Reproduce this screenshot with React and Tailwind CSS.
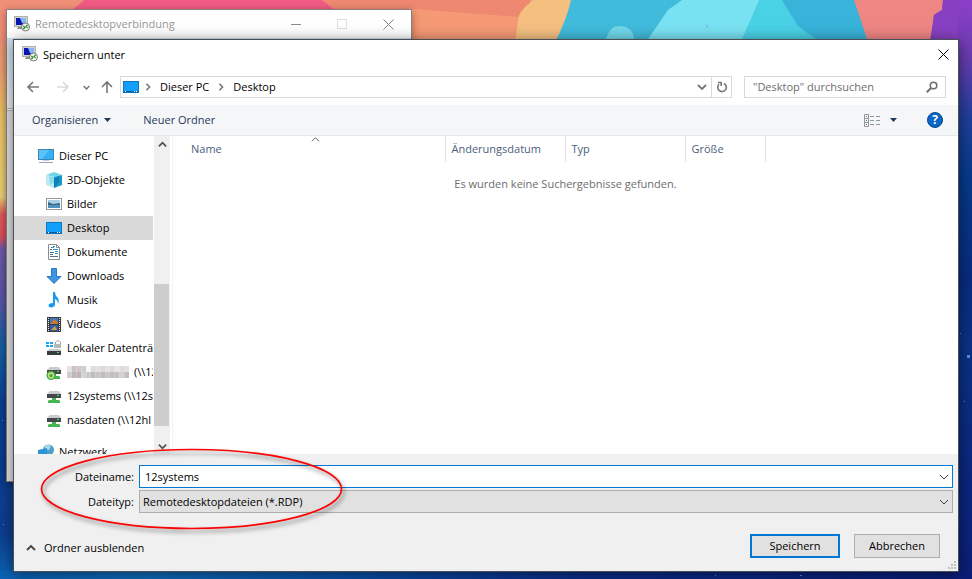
import React from "react";

const Wallpaper = () => (
  <svg
    className="absolute inset-0 w-full h-full"
    viewBox="0 0 972 579"
    preserveAspectRatio="none"
    aria-hidden="true"
  >
    <defs>
      <linearGradient id="leftSky" x1="0" y1="0" x2="0" y2="1">
        <stop offset="0" stopColor="#f08f76" />
        <stop offset="0.12" stopColor="#ef9f70" />
        <stop offset="0.2" stopColor="#ebc568" />
        <stop offset="0.34" stopColor="#ecd078" />
        <stop offset="0.37" stopColor="#e25a5a" />
        <stop offset="0.41" stopColor="#d9505c" />
        <stop offset="0.43" stopColor="#6f5bab" />
        <stop offset="0.52" stopColor="#5a55a6" />
        <stop offset="0.6" stopColor="#1460a4" />
        <stop offset="0.7" stopColor="#0d3f90" />
        <stop offset="0.92" stopColor="#0c3d8e" />
        <stop offset="1" stopColor="#0b63b4" />
      </linearGradient>
      <linearGradient id="rightSky" x1="0" y1="0" x2="0" y2="1">
        <stop offset="0" stopColor="#8c3fc8" />
        <stop offset="0.1" stopColor="#6a3cb2" />
        <stop offset="0.2" stopColor="#1f3f9c" />
        <stop offset="0.3" stopColor="#063a8c" />
        <stop offset="0.48" stopColor="#082c80" />
        <stop offset="0.6" stopColor="#0a3286" />
        <stop offset="1" stopColor="#0a1f78" />
      </linearGradient>
      <linearGradient id="ground" x1="0" y1="0" x2="1" y2="0">
        <stop offset="0" stopColor="#0a62b4" />
        <stop offset="0.15" stopColor="#0f6bb8" />
        <stop offset="0.35" stopColor="#0a52a8" />
        <stop offset="0.6" stopColor="#0a2c88" />
        <stop offset="1" stopColor="#0a1c78" />
      </linearGradient>
    </defs>
    <rect width="500" height="579" fill="url(#leftSky)" />
    <rect x="500" width="472" height="579" fill="url(#rightSky)" />
    <rect y="571" width="972" height="8" fill="url(#ground)" />
    <path d="M70 0H580V44H70Z" fill="#f59a74" />
    <path d="M0 0H90L74 9V44H0Z" fill="#f19078" />
    <path d="M84 0H322L334 9V44H70V12Z" fill="#f25c84" />
    <path d="M322 0L334 9H412L530 18V0Z" fill="#ee8871" />
    <path d="M412 9L530 18V44H412Z" fill="#f59a74" />
    <path d="M533 0Q518 12 518 20L515 44H572V0Z" fill="#f5bf80" />
    <path d="M571 0Q566 22 554 44H875V0Z" fill="#41bbdc" />
    <path d="M606 39Q610 26 618 26Q633 26 634 39Z" fill="#70d8ea" />
    <path d="M646 42L668 10L682 0H760L741 42Z" fill="#79e2f2" />
    <path d="M759 0H782L802 28L820 42H741Z" fill="#49d1e6" />
    <path d="M782 0L798 26L820 42H872L855 0Z" fill="#38b3d9" />
    <path d="M854 0H943L942 10L934 15L930 42H868Z" fill="#ee8684" />
    <path d="M943 0L942 10L934 15L931 42H958V0Z" fill="#8840c2" />
    <g fill="#7fb8ea" opacity="0.7">
      <rect x="967" y="355" width="3" height="3" />
      <rect x="960" y="333" width="1" height="1" />
      <rect x="964" y="401" width="1" height="1" />
      <rect x="2" y="420" width="1" height="1" />
      <rect x="3" y="524" width="1" height="1" />
      <rect x="715" y="575" width="1" height="1" />
      <rect x="800" y="575" width="2" height="1" />
      <rect x="706" y="25" width="2" height="3" />
    </g>
  </svg>
);

const RdpIcon = ({ className = "" }) => (
  <svg className={`w-4 h-4 shrink-0 ${className}`} viewBox="0 0 16 16" aria-hidden="true">
    <rect x="0.5" y="0.5" width="13" height="10" fill="#d4d4ce" stroke="#b0b0aa" />
    <rect x="2" y="2" width="10" height="7" fill="#0a14b4" />
    <path d="M6 2H12V7H8Z" fill="#86b4f4" />
    <path d="M4 11H8V13H3Z" fill="#8c8c88" />
    <circle cx="11.5" cy="11" r="4" fill="#f2f2ee" stroke="#7b7b78" />
    <path
      d="M9.3 10L11 11.5L9.3 13M13.7 8.8L12 10.3L13.7 11.8"
      fill="none"
      stroke="#1f8a2a"
      strokeWidth="1.1"
    />
  </svg>
);

const Chevron = ({ dir = "down", className = "" }) => {
  const paths = {
    down: "M1 3L5 7L9 3",
    up: "M1 7L5 3L9 7",
    right: "M3 1L7 5L3 9",
  };
  return (
    <svg
      className={`shrink-0 ${className}`}
      viewBox="0 0 10 10"
      fill="none"
      stroke="currentColor"
      aria-hidden="true"
    >
      <path d={paths[dir]} />
    </svg>
  );
};

const DesktopIcon = () => (
  <svg className="w-4 h-4" viewBox="0 0 16 16" aria-hidden="true">
    <rect x="0.5" y="2.5" width="15" height="11" fill="#12a0fa" stroke="#0f76bd" />
    <path d="M1 12.5H15" stroke="#0a5c9c" />
    <path d="M2 12.5H3M11 12.5H12M13 12.5H14" stroke="#fff" />
  </svg>
);

const NetDrive = ({ sync }) => (
  <svg className="w-4 h-4" viewBox="0 0 16 16" aria-hidden="true">
    <path d="M4 3H13L15 6H1Z" fill="#c9cbcd" />
    <rect x="1" y="6" width="14" height="4" fill="#45484b" />
    <rect x="11" y="7" width="2" height="1" fill="#4be05a" />
    <path d="M6 10H10V12H13L14 13V15H2V13L3 12H6Z" fill="#46b653" />
    {sync && (
      <>
        <circle cx="5" cy="11.5" r="4.5" fill="#3faf4c" />
        <circle cx="5" cy="11.5" r="2.5" fill="none" stroke="#d8e07a" strokeWidth="1.3" />
      </>
    )}
  </svg>
);

const treeIcons = {
  pc: (
    <svg className="w-4 h-4" viewBox="0 0 16 16" aria-hidden="true">
      <rect x="0.5" y="1.5" width="15" height="10" fill="#35b0f5" stroke="#3b87b4" />
      <path d="M1 2H11L4 11H1Z" fill="#5cc2fa" />
      <path d="M5 12.5H11" stroke="#c4cedc" />
      <path d="M1 14.5H15" stroke="#9aa6be" />
    </svg>
  ),
  cube: (
    <svg className="w-4 h-4" viewBox="0 0 16 16" aria-hidden="true">
      <path d="M8 0L16 3L8 5L0 3Z" fill="#6fd6ea" />
      <path d="M0 3L8 5V16L0 13Z" fill="#bdeaf3" />
      <path d="M16 3L8 5V16L16 13Z" fill="#1499cb" />
      <path d="M8 7L13 4V10L8 16Z" fill="#0d7fb4" />
      <path d="M3 4L8 5V11L4 13Z" fill="#8adcee" />
    </svg>
  ),
  picture: (
    <svg className="w-4 h-4" viewBox="0 0 16 16" aria-hidden="true">
      <rect x="0.5" y="2.5" width="15" height="11" fill="#fff" stroke="#9a9a9a" />
      <rect x="2" y="4" width="12" height="8" fill="#a8d0ea" />
      <path d="M2 6L7 8L14 7V9H2Z" fill="#41677d" />
      <rect x="2" y="9" width="12" height="3" fill="#4e93c0" />
    </svg>
  ),
  desktop: <DesktopIcon />,
  document: (
    <svg className="w-4 h-4" viewBox="0 0 16 16" aria-hidden="true">
      <path d="M2.5 0.5H10.5L13.5 3.5V15.5H2.5Z" fill="#fff" stroke="#8c8c8c" />
      <path d="M10.5 0.5V3.5H13.5" fill="none" stroke="#8c8c8c" />
      <path d="M4 5.5H6M4 8.5H8M4 10.5H7M4 12.5H12" stroke="#5c7186" />
      <path d="M7 2.5H9M5 3.5H8M7 5.5H12M9 7.5H12M9 9.5H12" stroke="#2e8fd0" />
    </svg>
  ),
  download: (
    <svg className="w-4 h-4" viewBox="0 0 16 16" aria-hidden="true">
      <path
        d="M5.5 0.5H10.5V8.5H15L8 15.5L1 8.5H5.5Z"
        fill="#3a95e2"
        stroke="#2f78bd"
      />
    </svg>
  ),
  music: (
    <svg className="w-4 h-4" viewBox="0 0 16 16" aria-hidden="true">
      <path
        d="M7 0H9Q9 3 11 5Q14 8 12 12Q12 8 9 7V12Q9 15 5.5 15.5Q2.500 15.5 2.500 13.3Q3 11 7 11Z"
        fill="#1b97ee"
      />
    </svg>
  ),
  video: (
    <svg className="w-4 h-4" viewBox="0 0 16 16" aria-hidden="true">
      <rect x="1" y="1" width="14" height="15" fill="#3c3c3c" />
      <rect x="4" y="2" width="8" height="6" fill="#3f78c4" />
      <rect x="4" y="9" width="8" height="6" fill="#305fa8" />
      <path d="M5 7L8 3L12 6V8H4Z" fill="#c27a35" />
      <path d="M5 14L9 10L11 14Z" fill="#d69a3c" />
      <path d="M2.500 2V16M13.500 2V16" stroke="#f0f0f0" strokeDasharray="1 1" />
    </svg>
  ),
  disk: (
    <svg className="w-4 h-4" viewBox="0 0 16 16" aria-hidden="true">
      <path d="M0 2H3V4H0ZM4 2H7V4H4ZM0 5H3V7H0ZM4 5H7V7H4Z" fill="#12a5f5" />
      <path d="M9.500 4V2Q12 -1 14.500 2V4" fill="none" stroke="#a2a8ac" />
      <rect x="8" y="4" width="7" height="4" fill="#b4babd" />
      <path d="M3 9H14L16 11H1Z" fill="#c9cbcd" />
      <rect x="1" y="11" width="14" height="4" fill="#3a3d40" />
      <rect x="11" y="12" width="2" height="1" fill="#4be05a" />
    </svg>
  ),
  sync: <NetDrive sync />,
  drive: <NetDrive />,
  network: (
    <svg className="w-4 h-4" viewBox="0 0 16 16" aria-hidden="true">
      <circle cx="10.5" cy="6" r="5.5" fill="#4e9fc9" />
      <path d="M7 2Q10 0 13 2L11 6L7 5Z" fill="#a8d8ea" />
      <path d="M0 6L9 4V12L0 11Z" fill="#2b94d4" />
      <path d="M1 13H12V14H1Z" fill="#8ba3b8" />
    </svg>
  ),
};

const treeItems = [
  { icon: "cube", label: "3D-Objekte" },
  { icon: "picture", label: "Bilder" },
  { icon: "desktop", label: "Desktop", selected: true },
  { icon: "document", label: "Dokumente" },
  { icon: "download", label: "Downloads" },
  { icon: "music", label: "Musik" },
  { icon: "video", label: "Videos" },
  { icon: "disk", label: "Lokaler Datenträ" },
  { icon: "sync", label: "(\\\\12", redacted: true },
  { icon: "drive", label: "12systems (\\\\12s" },
  { icon: "drive", label: "nasdaten (\\\\12hl" },
];

const mosaic = [
  "#e6e2e2", "#c9c4c6", "#d9c5c8", "#cfcfcf", "#f4f4f4", "#c4c4c4", "#cdcdcd",
  "#c2c2c2", "#d0d0d0", "#c6c2c2", "#d8d4d4", "#c4c4c4", "#cccccc", "#d2cccc",
  "#bdb8ba", "#c4b2b6", "#d4d4d4", "#cacaca", "#bebebe", "#c8c4c4", "#bcbcbc",
  "#cac6c6", "#c8bcc0", "#c2c2c2", "#d6cfcf", "#c0c0c0",
];

// Pixelated block over a hidden share name
const Redacted = () => (
  <svg className="w-[62px] h-3 shrink-0" viewBox="0 0 65 10" preserveAspectRatio="none" aria-hidden="true">
    {mosaic.map((color, i) => (
      <rect
        key={i}
        x={(i % 13) * 5}
        y={i < 13 ? 0 : 5}
        width="5"
        height="5"
        fill={color}
        opacity={i < 13 && i > 3 ? 0.6 : 1}
      />
    ))}
  </svg>
);

const TreeItem = ({ item, root }) => (
  <li>
    <button
      type="button"
      className={`flex w-full h-6 items-center gap-[5px] whitespace-nowrap ${
        root ? "pl-6" : "pl-8"
      } ${item.selected ? "bg-[#d9d9d9]" : ""}`}
    >
      <span className="shrink-0">{treeIcons[item.icon]}</span>
      {item.redacted && <Redacted />}
      {item.label}
    </button>
  </li>
);

const BackWindow = () => (
  <div className="absolute left-[6px] top-[9px] w-[406px] h-[473px] flex flex-col border border-[#8a7f7b] bg-[#e4e4e6] shadow-[0_2px_8px_rgba(0,0,0,0.35)]">
    <div className="flex h-[28px] shrink-0 items-center bg-white pl-[7px] pr-[17px] text-[#999]">
      <RdpIcon />
      <span className="ml-[5px] flex-1 truncate">Remotedesktopverbindung</span>
      <div className="flex items-center gap-9">
        <button type="button" aria-label="Minimieren">
          <svg className="w-[10px] h-[10px]" viewBox="0 0 10 10" stroke="#8c8c8c">
            <path d="M0 5.500H10" />
          </svg>
        </button>
        <button type="button" aria-label="Maximieren" disabled>
          <svg className="w-[10px] h-[10px]" viewBox="0 0 10 10" fill="none" stroke="#e0e0e0">
            <rect x="0.5" y="0.5" width="9" height="9" />
          </svg>
        </button>
        <button type="button" aria-label="Fenster schließen">
          <svg className="w-[11px] h-[11px]" viewBox="0 0 11 11" stroke="#808080">
            <path d="M0.500 0.500L10.500 10.500M10.500 0.500L0.500 10.500" />
          </svg>
        </button>
      </div>
    </div>
    <div className="h-[70px] bg-linear-to-b from-[#cfe2f0] to-[#f2f2f4]" />
    <div className="h-[3px] border-y border-[#b8b8bc] bg-white" />
  </div>
);

const AddressBar = () => (
  <div className="flex h-[29px] items-start pl-3 pr-3 text-[#6f6f6f]">
    <div className="flex h-[22px] w-[94px] shrink-0 items-center">
      <button type="button" aria-label="Zurück">
        <svg className="w-[14px] h-[14px]" viewBox="0 0 14 14" fill="none" stroke="#777" strokeWidth="1.6">
          <path d="M13 7H2M7 2L2 7L7 12" />
        </svg>
      </button>
      <button type="button" aria-label="Vorwärts" className="ml-4" disabled>
        <svg className="w-[14px] h-[14px]" viewBox="0 0 14 14" fill="none" stroke="#d9d9d9" strokeWidth="1.6">
          <path d="M1 7H12M7 2L12 7L7 12" />
        </svg>
      </button>
      <button type="button" aria-label="Zuletzt besucht" className="ml-[13px]">
        <Chevron className="w-[7px] h-[7px] stroke-2" />
      </button>
      <button type="button" aria-label="Nach oben" className="ml-[10px]">
        <svg className="w-[14px] h-[14px]" viewBox="0 0 14 14" fill="none" stroke="#777" strokeWidth="1.6">
          <path d="M7 13V2M2 7L7 2L12 7" />
        </svg>
      </button>
    </div>
    <div className="flex h-[22px] min-w-0 flex-1 items-center border border-[#d9d9d9] text-black">
      <span className="ml-[2px]"><DesktopIcon /></span>
      <Chevron dir="right" className="ml-[5px] w-2 h-2 stroke-2 text-[#777]" />
      <button type="button" className="ml-2">Dieser PC</button>
      <Chevron dir="right" className="ml-2 w-2 h-2 stroke-2 text-[#777]" />
      <button type="button" className="ml-2">Desktop</button>
      <button type="button" aria-label="Frühere Orte" className="ml-auto mr-1 text-[#777]">
        <Chevron className="w-[10px] h-[10px] stroke-[1.8]" />
      </button>
      <button
        type="button"
        aria-label="Aktualisieren"
        className="flex h-full w-5 items-center justify-center border-l border-[#d9d9d9]"
      >
        <svg className="w-3 h-3" viewBox="0 0 12 12" fill="none" stroke="#777" strokeWidth="1.6">
          <path d="M8 2.500A4.300 4.300 0 1 1 3 3.300" />
          <path d="M2 1.500H5.200V5" />
        </svg>
      </button>
    </div>
    <div className="ml-3 flex h-[22px] w-[202px] items-center border border-[#d9d9d9] pl-2 pr-[7px]">
      <input
        type="search"
        aria-label="Desktop durchsuchen"
        placeholder={'"Desktop" durchsuchen'}
        className="min-w-0 flex-1 outline-none placeholder:text-[#6d6d6d]"
      />
      <svg className="w-3 h-3" viewBox="0 0 12 12" fill="none" stroke="#6f6f6f" strokeWidth="1.6" aria-hidden="true">
        <circle cx="7.500" cy="4.500" r="3.300" />
        <path d="M5 7L0.800 11.200" strokeWidth="2" />
      </svg>
    </div>
  </div>
);

const CommandBar = () => (
  <div className="flex h-[31px] items-center border-b border-[#e6e7e8] bg-[#f5f6f7] pl-[18px] pr-[15px] text-[#1e395b]">
    <button type="button" className="flex items-center gap-[6px]">
      Organisieren
      <svg className="w-[7px] h-1" viewBox="0 0 7 4" fill="#1e395b" aria-hidden="true">
        <path d="M0 0H7L3.500 4Z" />
      </svg>
    </button>
    <button type="button" className="ml-8">Neuer Ordner</button>
    <button type="button" aria-label="Ansicht ändern" className="ml-auto flex items-center gap-[9px]">
      <svg className="w-[17px] h-[13px]" viewBox="0 0 17 13" fill="none" aria-hidden="true">
        <path d="M0.500 0.500H4.500V12.500H0.500ZM0.500 4.500H4.500M0.500 8.500H4.500" stroke="#8f969c" />
        <path d="M6 2.500H10M12 2.500H16M6 6.500H10M12 6.500H16M6 10.500H10M12 10.500H16" stroke="#8f969c" />
        <path d="M2 2.500H3M2 6.500H3" stroke="#3b7cc4" />
        <path d="M2 10.500H3" stroke="#c43b3b" />
      </svg>
      <svg className="w-[7px] h-1" viewBox="0 0 7 4" fill="#1e395b" aria-hidden="true">
        <path d="M0 0H7L3.500 4Z" />
      </svg>
    </button>
    <button
      type="button"
      aria-label="Hilfe"
      className="ml-[30px] flex h-4 w-4 items-center justify-center rounded-full border border-[#064a8c] bg-[#0766c6] text-xs font-bold text-white"
    >
      ?
    </button>
  </div>
);

const ScrollBar = () => (
  <div className="flex w-4 shrink-0 flex-col bg-[#f0f0f0] text-[#505050]" aria-hidden="true">
    <div className="flex h-4 items-center justify-center">
      <Chevron dir="up" className="w-[9px] h-[9px] stroke-2" />
    </div>
    <div className="flex-132" />
    <div className="mr-px flex-142 bg-[#cdcdcd]" />
    <div className="flex-12" />
    <div className="flex h-4 items-center justify-center">
      <Chevron className="w-[9px] h-[9px] stroke-2" />
    </div>
  </div>
);

const FileList = () => (
  <div className="ml-[2px] min-w-0 flex-1 border-l border-[#f3f3f3]">
    <table className="w-full table-fixed border-collapse text-left text-[#4c607a]">
      <thead>
        <tr className="h-[26px]">
          <th className="w-[272px] border-r border-[#e5e5e5] p-0 pl-[18px] font-normal">
            <div className="relative">
              Name
              <Chevron dir="up" className="absolute -top-[6px] left-[120px] h-[9px] w-[9px] text-[#505050]" />
            </div>
          </th>
          <th className="w-[120px] border-r border-[#e5e5e5] p-0 pl-[6px] font-normal">Änderungsdatum</th>
          <th className="w-[120px] border-r border-[#e5e5e5] p-0 pl-[6px] font-normal">Typ</th>
          <th className="w-20 border-r border-[#e5e5e5] p-0 pl-[6px] font-normal">Größe</th>
          <td />
        </tr>
      </thead>
      <tbody>
        <tr>
          <td colSpan={5} className="pt-[14px] text-center text-[#6d6d6d]">
            Es wurden keine Suchergebnisse gefunden.
          </td>
        </tr>
      </tbody>
    </table>
  </div>
);

const SaveForm = () => (
  <div className="relative shrink-0 bg-[#f0f0f0]">
    <div className="grid grid-cols-[120px_1fr] items-center gap-x-[5px] gap-y-[2px] pt-[11px] pr-[5px]">
      <label htmlFor="filename" className="text-right">Dateiname:</label>
      <div className="flex h-[23px] items-center border border-[#0078d7] bg-white">
        <input
          id="filename"
          defaultValue="12systems"
          className="min-w-0 flex-1 pl-[5px] outline-none"
        />
        <button type="button" aria-label="Frühere Dateinamen" className="mr-[3px] text-[#444]">
          <Chevron className="w-[10px] h-[10px]" />
        </button>
      </div>
      <label htmlFor="filetype" className="text-right">Dateityp:</label>
      <div className="relative">
        <select
          id="filetype"
          className="block h-[23px] w-full appearance-none border border-[#adadad] bg-[#e1e1e1] pl-[3px]"
        >
          <option>Remotedesktopdateien (*.RDP)</option>
        </select>
        <Chevron className="pointer-events-none absolute right-1 top-[7px] w-[10px] h-[10px] text-[#444]" />
      </div>
    </div>

    <div className="flex items-center pt-[21px] pb-[13px] pl-3 pr-[18px]">
      <button type="button" className="flex items-center gap-2 pt-1">
        <Chevron dir="up" className="w-[10px] h-[10px] stroke-[1.8] text-[#444]" />
        Ordner ausblenden
      </button>
      <button
        type="button"
        className="ml-auto h-6 w-[90px] border-2 border-[#0078d7] bg-[#e1e1e1]"
      >
        Speichern
      </button>
      <button type="button" className="ml-[14px] h-6 w-[86px] border border-[#adadad] bg-[#e1e1e1]">
        Abbrechen
      </button>
    </div>

    {/* Highlight around the file name and type */}
    <svg
      className="pointer-events-none absolute left-[24px] -top-[8px] h-[88px] w-[310px] overflow-visible"
      viewBox="0 0 310 88"
      fill="none"
      aria-hidden="true"
    >
      <ellipse
        cx="153.500"
        cy="43"
        rx="150"
        ry="39.500"
        stroke="#fa0505"
        strokeWidth="1.700"
        className="drop-shadow-[2px_3px_2px_rgba(0,0,0,0.5)]"
      />
    </svg>

    {/* Resize grip */}
    <svg
      className="absolute bottom-[2px] right-[2px] h-2 w-2"
      viewBox="0 0 8 8"
      fill="#bfbfbf"
      aria-hidden="true"
    >
      <path d="M6 0H8V2H6ZM3 3H5V5H3ZM6 3H8V5H6ZM0 6H2V8H0ZM3 6H5V8H3ZM6 6H8V8H6Z" />
    </svg>
  </div>
);

const SaveDialog = () => (
  <div
    role="dialog"
    aria-labelledby="dialog-title"
    className="absolute left-[13px] right-[13px] top-[39px] bottom-[7px] flex flex-col border border-[#4a4f55] bg-white shadow-[0_2px_14px_rgba(0,0,0,0.5)]"
  >
    <div className="flex h-9 shrink-0 items-start pl-2 pr-[9px] pt-[6px]">
      <RdpIcon />
      <h1 id="dialog-title" className="ml-[5px] flex-1 leading-[18px]">Speichern unter</h1>
      <button type="button" aria-label="Schließen" className="pt-[3px]">
        <svg className="w-[11px] h-[11px]" viewBox="0 0 11 11" stroke="#000">
          <path d="M0.500 0.500L10.500 10.500M10.500 0.500L0.500 10.500" />
        </svg>
      </button>
    </div>
    <AddressBar />
    <CommandBar />
    <div className="flex min-h-0 flex-1">
      <nav className="w-[139px] shrink-0 overflow-hidden pt-2" aria-label="Ordner">
        <ul>
          <TreeItem item={{ icon: "pc", label: "Dieser PC" }} root />
          {treeItems.map((item) => (
            <TreeItem key={item.label} item={item} />
          ))}
        </ul>
        <ul className="mt-2">
          <TreeItem item={{ icon: "network", label: "Netzwerk" }} root />
        </ul>
      </nav>
      <div className="w-px shrink-0" />
      <ScrollBar />
      <FileList />
    </div>
    <SaveForm />
  </div>
);

const App = () => {
  return (
    <div className="relative h-screen overflow-hidden bg-[#0a2c88] font-['Open_Sans','Noto_Sans',sans-serif] text-[11px] leading-4 text-black">
      <Wallpaper />
      <BackWindow />
      <SaveDialog />
    </div>
  );
};

export default App;
